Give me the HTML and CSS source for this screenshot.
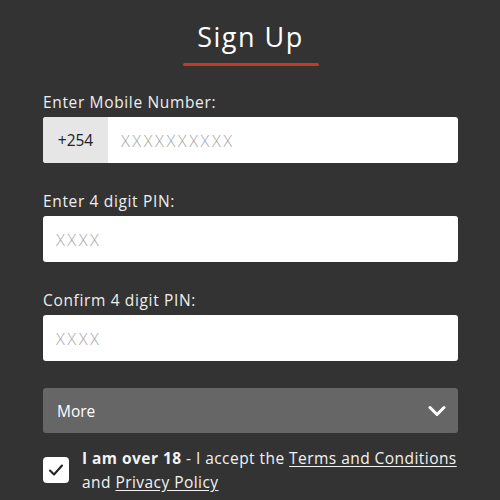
FILE: index.html
```html
<!DOCTYPE html>
<html lang="en">
<head>
<meta charset="utf-8">
<title>Sign Up</title>
<link rel="stylesheet" href="styles.css">
</head>
<body>
<main class="signup">
  <h1 class="title">Sign Up</h1>
  <div class="title-rule"></div>

  <label class="label first">Enter Mobile Number:</label>
  <div class="field">
    <span class="prefix">+254</span>
    <span class="placeholder">XXXXXXXXXX</span>
  </div>

  <label class="label">Enter 4 digit PIN:</label>
  <div class="field">
    <span class="placeholder">XXXX</span>
  </div>

  <label class="label">Confirm 4 digit PIN:</label>
  <div class="field">
    <span class="placeholder">XXXX</span>
  </div>

  <div class="more">
    <span>More</span>
    <svg class="chevron" width="18" height="12" viewBox="0 0 18 12"><path d="M2 2.5 L9 9.5 L16 2.5" fill="none" stroke="#fff" stroke-width="3" stroke-linecap="round" stroke-linejoin="round"/></svg>
  </div>

  <div class="agree">
    <span class="checkbox"><svg width="16" height="14" viewBox="0 0 16 14"><path d="M2 7.5 L6 11.5 L14 2.5" fill="none" stroke="#222" stroke-width="2" stroke-linecap="round" stroke-linejoin="round"/></svg></span>
    <p class="agree-text"><b>I am over 18</b> - I accept the <a href="#">Terms and Conditions</a> and <a href="#">Privacy Policy</a></p>
  </div>
</main>
</body>
</html>
```
FILE: styles.css
```css
html, body {
  margin: 0;
  padding: 0;
  background: #333333;
}
body {
  font-family: "Open Sans", "DejaVu Sans", sans-serif;
  color: #f2f2f2;
}
.signup {
  padding: 20px 42px 0 43px;
  display: flex;
  flex-direction: column;
}
.title {
  margin: 0;
  font-size: 27px;
  line-height: 34px;
  font-weight: 500;
  text-align: center;
  color: #ffffff;
  letter-spacing: 1.5px;
}
.title-rule {
  align-self: center;
  width: 136px;
  height: 3px;
  margin-top: 9px;
  margin-left: 1px;
  background: #c53a22;
  border-radius: 2px;
}
.label {
  display: block;
  margin-top: 28px;
  font-size: 15.5px;
  line-height: 20px;
  color: #eeeeee;
  letter-spacing: 0.65px;
}
.label.first {
  margin-top: 26px;
}
.field {
  margin-top: 5px;
  height: 46px;
  background: #ffffff;
  border-radius: 3px;
  display: flex;
  align-items: center;
  overflow: hidden;
}
.prefix {
  width: 65px;
  height: 100%;
  background: #e6e6e6;
  color: #222;
  font-size: 15.5px;
  display: flex;
  align-items: center;
  justify-content: center;
}
.placeholder {
  padding-left: 13px;
  color: #a8a8a8;
  font-size: 16.5px;
  font-weight: 300;
  letter-spacing: 2.5px;
}
.more {
  margin-top: 27px;
  height: 45px;
  background: #666666;
  border-radius: 3px;
  display: flex;
  align-items: center;
  justify-content: space-between;
  padding: 0 12px 0 14px;
  font-size: 15.5px;
  color: #ffffff;
}
.chevron {
  display: block;
}
.agree {
  margin-top: 13px;
  display: flex;
  align-items: center;
  gap: 13px;
}
.checkbox {
  flex: none;
  width: 26px;
  height: 26px;
  background: #ffffff;
  border-radius: 4px;
  display: flex;
  align-items: center;
  justify-content: center;
}
.agree-text {
  margin: 0;
  font-size: 15.5px;
  line-height: 24px;
  color: #f2f2f2;
  letter-spacing: 0.45px;
}
.agree-text b {
  font-weight: 700;
}
.agree-text a {
  color: #f2f2f2;
  text-decoration: underline;
  text-underline-offset: 2px;
}
```
